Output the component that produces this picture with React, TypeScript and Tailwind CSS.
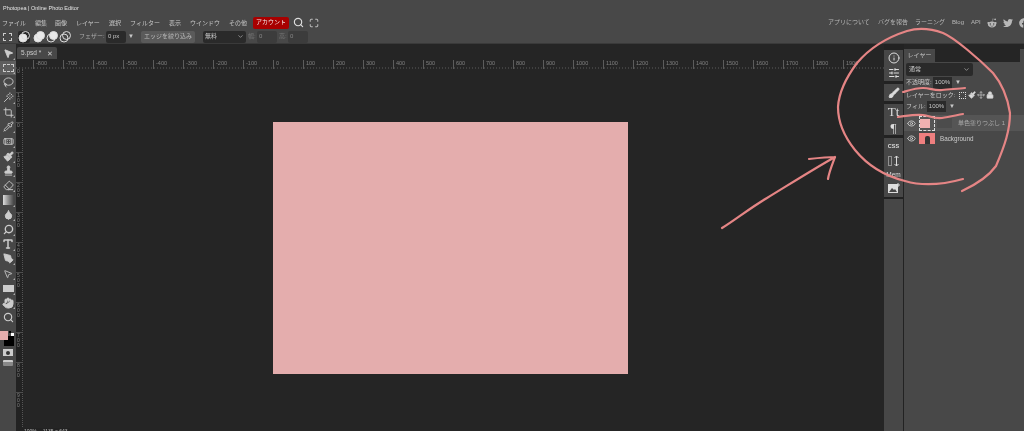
import {
  Bandage,
  Brush,
  ChevronDown,
  Crop,
  Eraser,
  Eye,
  Droplet,
  Hand,
  Info,
  Lasso,
  Lock,
  Maximize,
  MousePointer2,
  Move,
  Paintbrush,
  PenTool,
  Pipette,
  Search,
  SlidersHorizontal,
  Stamp,
  Type,
  Wand,
} from "lucide-react";
import { FaFacebook, FaRedditAlien, FaTwitter } from "react-icons/fa";

const JP = "font-['Liberation_Sans','Noto_Sans_CJK_JP',sans-serif]";

const menus = [
  { label: "ファイル", cls: "w-[33px]" },
  { label: "編集", cls: "w-[20px]" },
  { label: "画像", cls: "w-[21px]" },
  { label: "レイヤー", cls: "w-[33px]" },
  { label: "選択", cls: "w-[21px]" },
  { label: "フィルター", cls: "w-[39px]" },
  { label: "表示", cls: "w-[21px]" },
  { label: "ウインドウ", cls: "w-[39px]" },
  { label: "その他", cls: "w-[24px]" },
];

const rulerLabels = [-800, -700, -600, -500, -400, -300, -200, -100, 0, 100, 200, 300, 400, 500, 600, 700, 800, 900, 1000, 1100, 1200, 1300, 1400, 1500, 1600, 1700, 1800, 1900];
const sideLabels = ["100", "0", "100", "200", "300", "400", "500", "600", "700", "800", "900"];

const Corner = () => <span className="absolute right-[1px] bottom-[1px] border-b-2 border-l-2 border-b-[#aaa] border-l-transparent" />;

const tools = [
  <MousePointer2 key="move" size={11} fill="#ccc" />,
  <div key="marquee" className="h-[8px] w-[11px] border border-dashed border-[#ccc]" />,
  <Lasso key="lasso" size={11} />,
  <Wand key="wand" size={11} />,
  <Crop key="crop" size={11} />,
  <Pipette key="pipette" size={11} />,
  <Bandage key="heal" size={11} />,
  <Paintbrush key="brush" size={11} fill="#ccc" />,
  <Stamp key="stamp" size={11} fill="#ccc" />,
  <Eraser key="eraser" size={11} />,
  <div key="gradient" className="h-[10px] w-[11px] bg-gradient-to-r from-[#ddd] to-[#444]" />,
  <Droplet key="blur" size={11} fill="#ccc" />,
  <Search key="dodge" size={11} strokeWidth={3} className="-scale-x-100" />,
  <Type key="type" size={12} strokeWidth={3} />,
  <PenTool key="pen" size={11} fill="#ccc" />,
  <MousePointer2 key="path" size={10} />,
  <div key="rect" className="h-[7px] w-[11px] bg-[#ccc]" />,
  <Hand key="hand" size={12} fill="#ccc" />,
  <Search key="zoom" size={11} strokeWidth={2.5} />,
];

const BooleanIcon = ({ kind }: { kind: number }) => (
  <svg width="12" height="12" viewBox="0 0 12 12" fill="none" stroke="#ddd">
    <circle cx="5" cy="7" r="4" fill={kind < 2 ? "#e8e8e8" : "none"} />
    <circle cx="7.5" cy="4.5" r="4" fill={kind === 1 || kind === 2 ? "#e8e8e8" : "none"} />
  </svg>
);

const Ruler = () => (
  <div className="relative h-[9px] shrink-0 overflow-hidden pl-[17px]">
    <div className="flex w-max">
      {rulerLabels.map((n) => (
        <div key={n} className="h-[9px] w-[30px] shrink-0 border-l border-[#5c5c5c] pl-[2px] font-['Liberation_Sans',sans-serif] text-[5.5px] leading-[7px] text-[#808080]">
          {n}
        </div>
      ))}
    </div>
    <svg className="absolute bottom-0 left-0" width="868" height="2">
      <line x1="0" y1="1" x2="868" y2="1" stroke="#5c5c5c" strokeDasharray="1 2" />
    </svg>
  </div>
);

const SideRuler = () => (
  <div className="flex w-[7px] shrink-0 flex-col overflow-hidden border-r border-dotted border-[#555] bg-[#222]">
    <div className="h-[23px] shrink-0 pl-[1px] font-['Liberation_Sans',sans-serif] text-[5px] leading-[5px] text-[#808080]">0</div>
    {sideLabels.map((label, i) => (
      <div key={i} className="flex h-[30px] shrink-0 flex-col border-t border-[#4c4c4c] pl-[1px] font-['Liberation_Sans',sans-serif] text-[5px] leading-[5px] text-[#808080]">
        {label.split("").map((c, j) => (
          <span key={j}>{c}</span>
        ))}
      </div>
    ))}
  </div>
);

export default function App() {
  return (
    <div className={`relative flex h-[431px] w-[1024px] flex-col overflow-hidden bg-[#252525] text-[#c8c8c8] ${JP} blur-[0.4px]`}>
      {/* header */}
      <div className="h-[44px] shrink-0 border-b border-[#3a3a3a] bg-[#484848]">
        <div className="h-[15px] whitespace-nowrap pl-[3px] pt-[2px] text-[5.5px] leading-[12px] text-[#e4e4e4]">Photopea | Online Photo Editor</div>
        <div className="flex h-[15px] items-center pl-[2px] text-[6px]">
          {menus.map((m) => (
            <span key={m.label} className={`${m.cls} shrink-0 whitespace-nowrap leading-[12px]`}>
              {m.label}
            </span>
          ))}
          <span className="flex h-[12px] w-[36px] items-center justify-center whitespace-nowrap rounded-[2px] bg-[#a80000] text-[#f4e8e8]">アカウント</span>
          <Search size={11} className="ml-[4px] text-[#ddd]" strokeWidth={2.5} />
          <Maximize size={10} className="ml-[5px] text-[#ddd]" />
          <div className="ml-auto flex items-center whitespace-nowrap text-[#b8b8b8]">
            <span className="w-[50px]">アプリについて</span>
            <span className="w-[37px]">バグを報告</span>
            <span className="w-[37px]">ラーニング</span>
            <span className="w-[19px]">Blog</span>
            <span className="w-[16px]">API</span>
            <FaRedditAlien size={10} className="mr-[6px]" />
            <FaTwitter size={10} className="mr-[6px]" />
            <FaFacebook size={10} className="mr-[-5px]" />
          </div>
        </div>
        <div className="flex h-[13px] items-center whitespace-nowrap text-[6px]">
          <div className="ml-[3px] h-[8px] w-[9px] border border-dashed border-[#ccc]" />
          <div className="ml-[6px] flex h-[12px] w-[12px] items-center justify-center rounded-[2px] bg-[#2a2a2a]">
            <BooleanIcon kind={0} />
          </div>
          <div className="ml-[3px]"><BooleanIcon kind={1} /></div>
          <div className="ml-[1px]"><BooleanIcon kind={2} /></div>
          <div className="ml-[1px]"><BooleanIcon kind={3} /></div>
          <span className="ml-[8px] w-[27px] text-[#aaa]">フェザー:</span>
          <span className="flex h-[12px] w-[20px] items-center rounded-[2px] bg-[#2a2a2a] pl-[2px]">0 px</span>
          <span className="ml-[2px] w-[6px] text-[6px]">▼</span>
          <span className="ml-[7px] flex h-[12px] w-[54px] items-center justify-center rounded-[2px] bg-[#5a5a5a] text-[#bbb]">エッジを絞り込み</span>
          <span className="ml-[8px] flex h-[12px] w-[43px] items-center justify-between rounded-[2px] bg-[#2a2a2a] px-[2px]">
            無料
            <ChevronDown size={7} />
          </span>
          <span className="ml-[2px] w-[9px] text-[#777]">幅:</span>
          <span className="flex h-[12px] w-[20px] items-center rounded-[2px] bg-[#3c3c3c] pl-[2px] text-[#888]">0</span>
          <span className="ml-[2px] w-[9px] text-[#777]">高:</span>
          <span className="flex h-[12px] w-[20px] items-center rounded-[2px] bg-[#3c3c3c] pl-[2px] text-[#888]">0</span>
        </div>
      </div>

      {/* body */}
      <div className="flex min-h-0 flex-1">
        <div className="flex w-[16px] shrink-0 flex-col bg-[#474747] pt-[2px] text-[#ccc]">
          {tools.map((tool, i) => (
            <div key={i} className={`relative flex h-[14.7px] w-[16px] shrink-0 items-center justify-center ${i === 1 ? "bg-[#5e5e5e]" : ""}`}>
              {tool}
              {i !== 18 && <Corner />}
            </div>
          ))}
          <div className="relative mt-[6px] h-[15px] shrink-0">
            <div className="absolute left-[4px] top-[5px] h-[10px] w-[10px] bg-black" />
            <div className="absolute left-0 top-0 h-[9px] w-[8px] bg-[#e5aeae]" />
            <div className="absolute left-[9px] top-0 h-[2px] w-[2px] bg-black" />
            <div className="absolute left-[11px] top-[2px] h-[3px] w-[3px] bg-white" />
          </div>
          <div className="mt-[3px] flex h-[9px] justify-center">
            <div className="flex h-[7px] w-[10px] items-center justify-center bg-[#ccc]">
              <div className="h-[4px] w-[4px] rounded-full bg-[#333]" />
            </div>
          </div>
          <div className="mt-[2px] flex h-[9px] justify-center">
            <div className="h-[6px] w-[10px] rounded-[1px] border-t-2 border-[#ccc] bg-[#888]" />
          </div>
        </div>

        <div className="flex min-w-0 flex-1 flex-col">
          <div className="flex h-[16px] shrink-0 items-end pb-px pl-[1px]">
            <div className="flex h-[12px] w-[40px] items-center justify-between whitespace-nowrap rounded-t-[2px] bg-[#484848] px-[4px] text-[6.5px] text-[#ccc]">
              5.psd *<span className="text-[7px] leading-none">✕</span>
            </div>
          </div>
          <Ruler />
          <div className="flex min-h-0 flex-1">
            <SideRuler />
            <div className="flex-1 pl-[250px] pt-[53px]">
              <div className="h-[252px] w-[355px] bg-[#e4adad]" />
            </div>
          </div>
        </div>

        {/* icon strip */}
        <div className="flex w-[20px] shrink-0 flex-col gap-[2px] bg-[#222] pt-[6px] text-[#ddd]">
          <div className="flex h-[31px] w-[19px] flex-col items-center justify-around bg-[#474747]">
            <Info size={12} />
            <SlidersHorizontal size={12} />
          </div>
          <div className="mt-px flex h-[17px] w-[19px] items-center justify-center bg-[#474747]">
            <Brush size={12} fill="#ddd" />
          </div>
          <div className="mt-px flex h-[31px] w-[19px] flex-col items-center justify-around bg-[#474747] font-['Liberation_Serif',serif] text-[13px] leading-none">
            <span>Tt</span>
            <span>¶</span>
          </div>
          <div className="mt-px flex h-[59px] w-[19px] flex-col items-center gap-[5px] bg-[#474747] pt-[6px]">
            <span className="text-[5.5px] font-bold leading-none">CSS</span>
            <svg width="13" height="12" viewBox="0 0 13 12" fill="none" stroke="#ddd">
              <rect x="1.5" y="1.5" width="3" height="9" strokeDasharray="1 1" />
              <path d="M9.5 1v10M7.5 3l2-2 2 2M7.5 9l2 2 2-2" />
            </svg>
            <span className="whitespace-nowrap text-[6.5px] leading-none">Mem</span>
            <svg width="12" height="10" viewBox="0 0 12 10">
              <rect x="0" y="1" width="10" height="9" fill="#ddd" />
              <path d="M1 9l3-4 2 2 1-1 2 3z" fill="#474747" />
              <path d="M10 0v4M8 2h4" stroke="#ddd" />
            </svg>
          </div>
          <div className="w-[19px] flex-1 bg-[#474747]" />
        </div>

        {/* layers panel */}
        <div className="flex w-[120px] shrink-0 flex-col bg-[#484848]">
          <div className="flex h-[18px] shrink-0 items-end justify-between bg-[#252525]">
            <span className="flex h-[13px] w-[31px] items-center justify-center whitespace-nowrap bg-[#484848] text-[6px]">レイヤー</span>
            <span className="h-[13px] w-[4px] bg-[#484848]" />
          </div>
          <div className="flex flex-col whitespace-nowrap px-[2px] pt-[1px] text-[6px]">
            <div className="flex h-[13px] w-[67px] items-center justify-between rounded-[2px] bg-[#2a2a2a] px-[3px]">
              通常
              <ChevronDown size={7} />
            </div>
            <div className="flex h-[13px] items-center">
              <span className="w-[27px]">不透明度:</span>
              <span className="flex h-[12px] w-[19px] items-center justify-center bg-[#2a2a2a]">100%</span>
              <span className="ml-[3px]">▼</span>
            </div>
            <div className="flex h-[12px] items-center">
              <span className="w-[52px]">レイヤーをロック:</span>
              <div className="ml-[1px] h-[7px] w-[7px] border border-dotted border-[#ddd]" />
              <Paintbrush size={8} className="ml-[2px]" fill="#ddd" />
              <Move size={8} className="ml-[1px]" />
              <Lock size={8} className="ml-[1px]" fill="#ddd" />
            </div>
            <div className="flex h-[11px] items-center">
              <span className="w-[21px]">フィル:</span>
              <span className="flex h-[11px] w-[19px] items-center justify-center bg-[#2a2a2a]">100%</span>
              <span className="ml-[3px]">▼</span>
            </div>
          </div>
          <div className="mt-[3px] flex h-[16px] items-center whitespace-nowrap bg-[#555] pl-[3px] text-[6px] text-[#aaa]">
            <Eye size={9} className="text-[#ddd]" />
            <div className="ml-[3px] flex h-[15px] w-[16px] items-center border border-dashed border-[#ddd]">
              <div className="h-[9px] w-[10px] bg-[#f0b0b0]" />
            </div>
            <div className="ml-[2px] h-[10px] w-[15px] bg-[#4c4c4c]" />
            <span className="ml-[6px]">単色塗りつぶし 1</span>
          </div>
          <div className="flex h-[15px] items-center pl-[3px] text-[6.3px] text-[#ccc]">
            <Eye size={9} className="text-[#ddd]" />
            <div className="ml-[3px] flex h-[11px] w-[16px] items-end justify-center bg-[#ee7f7f]">
              <div className="h-[8px] w-[5px] rounded-t-[2px] bg-[#333]" />
            </div>
            <span className="ml-[5px]">Background</span>
          </div>
        </div>
      </div>

      {/* status */}
      <div className="absolute bottom-0 left-[22px] flex h-[3px] gap-[6px] overflow-hidden whitespace-nowrap bg-[#222] px-[2px] text-[5px] leading-[6px] text-[#bbb]">
        <span>100%</span>
        <span>1135 × 643</span>
      </div>

      {/* hand-drawn marks */}
      <svg className="pointer-events-none absolute left-0 top-0" width="1024" height="431" fill="none" stroke="#e58585" strokeWidth="2.2" strokeLinecap="round" strokeLinejoin="round">
        <path d="M963 179C945 184 925 187 905 181C885 176 868 166 855 150C843 135 838 120 838 107C839 90 848 75 857 63C868 50 885 38 907 31C920 27 932 29 943 33C955 38 980 60 993 73C1003 85 1008 100 1010 113C1010 130 1005 145 996 166C988 177 975 185 962 191" />
        <path d="M903 92C910 90 916 88 923 88C930 88 935 91 942 90C950 89 958 89 965 88" />
        <path d="M898 117C906 116 915 114 923 115C930 116 934 119 942 118C950 117 957 115 963 114" />
        <path d="M722 228C735 220 750 208 767 198C790 184 812 170 835 157M809 159C818 158 827 157 835 157C832 165 829 172 828 179" />
      </svg>
    </div>
  );
}
